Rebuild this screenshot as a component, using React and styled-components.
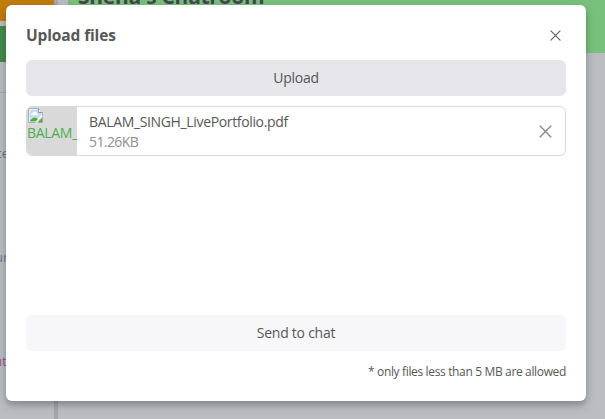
import React from "react";
import styled, { createGlobalStyle } from "styled-components";

const GlobalStyle = createGlobalStyle`
  * { box-sizing: border-box; }
  body { margin: 0; overflow: hidden; font-family: "Open Sans", "Noto Sans", sans-serif; color: #575757; }
  button { font-family: inherit; color: inherit; border: 0; padding: 0; }
`;

const Page = styled.div`
  position: relative;
  display: flex;
  width: 605px;
  height: 419px;
  overflow: hidden;
  background: #bcbdc1;
`;

const Sidebar = styled.aside`
  display: flex;
  flex-direction: column;
  width: 58px;
  height: 100%;
  border-right: 4px solid #a6a6aa;
`;

const SideButton = styled.div`
  flex: none;
  height: ${({ $height }) => $height}px;
  margin-bottom: ${({ $gap }) => $gap}px;
  background: ${({ $color }) => $color};
`;

const RoomList = styled.div`
  border-top: 1px solid #aaabb0;
  padding-top: 50px;
  display: flex;
  flex-direction: column;
`;

const RoomName = styled.span`
  height: 104px;
  width: 60px;
  margin-left: ${({ $shift }) => $shift}px;
  font-size: 13px;
  line-height: 20px;
  color: ${({ $color }) => $color};
`;

const Chat = styled.main`
  flex: 1;
  margin-left: 10px;
`;

const ChatHeader = styled.header`
  height: 53px;
  background: #78c17c;
`;

const RoomTitle = styled.h1`
  margin: 0;
  padding-left: 10px;
  font-size: 21px;
  font-weight: 700;
  line-height: 28px;
  letter-spacing: -0.28px;
  color: #45474c;
  transform: translateY(-18px);
`;

const Dialog = styled.section`
  position: absolute;
  left: 6px;
  top: 5px;
  width: 580px;
  height: 396px;
  padding: 19px 20px 21px;
  display: flex;
  flex-direction: column;
  background: #fff;
  border-radius: 6px;
  box-shadow: 0 4px 12px rgba(0, 0, 0, 0.2), 0 4px 4px rgba(0, 0, 0, 0.12);
`;

const DialogHeader = styled.div`
  display: flex;
  align-items: center;
  justify-content: space-between;
  height: 22px;
  padding-right: 5px;
`;

const Heading = styled.h2`
  margin: 0;
  font-size: 15.5px;
  font-weight: 700;
  line-height: 22px;
  letter-spacing: -0.13px;
`;

const CloseButton = styled.button`
  display: flex;
  background: none;
  color: ${({ $muted }) => ($muted ? "#858585" : "#5d5d5d")};
`;

const BlockButton = styled.button`
  flex: none;
  height: 36px;
  border-radius: 6px;
  background: ${({ $active }) => ($active ? "#e5e5ea" : "#f7f7fa")};
  font-size: 14px;
  line-height: 36px;
  letter-spacing: -0.25px;
`;

const UploadArea = styled.div`
  display: flex;
  flex-direction: column;
  gap: 10px;
  flex: 1;
  padding-top: 14px;
`;

const FileItem = styled.div`
  display: flex;
  align-items: center;
  height: 50px;
  border: 1px solid #d9d9d9;
  border-radius: 6px;
  overflow: hidden;
  padding-right: 13px;
`;

const Preview = styled.div`
  flex: none;
  width: 50px;
  height: 48px;
  background: #d9d9d9;
  color: #4caf50;
  font-size: 14px;
  line-height: 18px;
  overflow: hidden;
  white-space: nowrap;
  svg { display: block; }
`;

const PreviewLabel = styled.span`
  display: block;
  letter-spacing: -0.3px;
`;

const FileInfo = styled.div`
  flex: 1;
  padding-top: 2px;
  padding-left: 12px;
  font-size: 14px;
  line-height: 20px;
`;

const FileName = styled.div`
  letter-spacing: -0.35px;
`;

const FileSize = styled.div`
  color: #8e8e93;
  letter-spacing: -0.6px;
`;

const Note = styled.small`
  margin-top: 12px;
  height: 17px;
  font-size: 12px;
  line-height: 17px;
  text-align: right;
  white-space: nowrap;
  letter-spacing: -0.35px;
`;

const Cross = ({ size }) => (
  <svg width={size} height={size} viewBox="0 0 12 12" fill="none" stroke="currentColor" strokeLinecap="round">
    <path d="M1 1 11 11M11 1 1 11" strokeWidth="1.2" />
  </svg>
);

const MissingImage = () => (
  <svg width="17" height="17" viewBox="0 0 17 17">
    <path d="M1.5 1.5h10l4 4v10h-14z" fill="#fff" stroke="#a9adb3" />
    <path d="M2.5 2.5h9v3.5h3v2L8 14H2.5z" fill="#c6d9f7" />
    <path d="M4 8.2q0-2 1.7-2 .4-1.7 2-1.7 1.8 0 2 1.8 1.2 0 1.3 1.9z" fill="#fff" />
    <path d="M2.5 14.5q4-5.5 7-3.5l1.5 1-2.5 2.5z" fill="#50ad36" />
    <path d="M17 7.5 8 16h3l6-5.5z" fill="#d9d9d9" />
    <path d="M11.5 1.5v4h4" fill="#e9ebed" stroke="#8f9499" />
    <path d="m11.5 14.5 4-4v5h-4z" fill="#50ad36" stroke="#a9adb3" strokeWidth=".5" />
  </svg>
);

export default function App() {
  return (
    <Page>
      <GlobalStyle />
      <Sidebar>
        <SideButton $height={21} $gap={5} $color="#c27c0e" />
        <SideButton $height={36} $gap={30} $color="#438d4b" />
        <RoomList>
          <RoomName $shift={-3} $color="#5d7687">te</RoomName>
          <RoomName $shift={-5} $color="#657d95">ur</RoomName>
          <RoomName $shift={-6} $color="#9a4f86">ut</RoomName>
        </RoomList>
      </Sidebar>
      <Chat>
        <ChatHeader>
          <RoomTitle>Shena's Chatroom</RoomTitle>
        </ChatHeader>
      </Chat>
      <Dialog role="dialog">
        <DialogHeader>
          <Heading>Upload files</Heading>
          <CloseButton aria-label="Close"><Cross size={11} /></CloseButton>
        </DialogHeader>
        <UploadArea>
          <BlockButton $active>Upload</BlockButton>
          <FileItem>
            <Preview>
              <MissingImage />
              <PreviewLabel>BALAM_</PreviewLabel>
            </Preview>
            <FileInfo>
              <FileName>BALAM_SINGH_LivePortfolio.pdf</FileName>
              <FileSize>51.26KB</FileSize>
            </FileInfo>
            <CloseButton $muted aria-label="Remove file"><Cross size={13} /></CloseButton>
          </FileItem>
        </UploadArea>
        <BlockButton>Send to chat</BlockButton>
        <Note>* only files less than 5 MB are allowed</Note>
      </Dialog>
    </Page>
  );
}
